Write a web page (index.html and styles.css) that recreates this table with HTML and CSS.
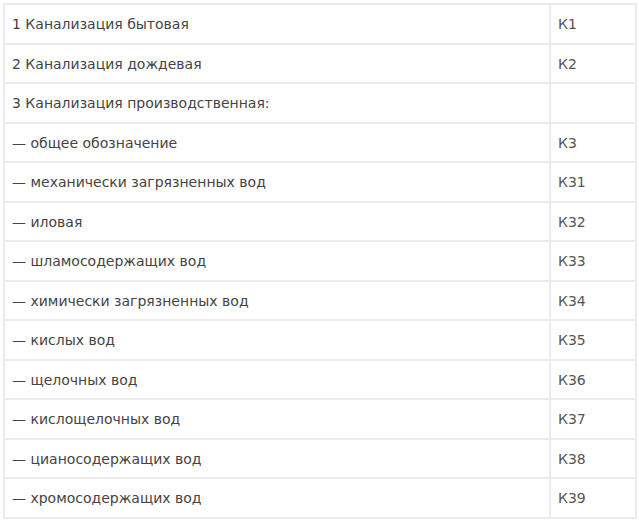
FILE: index.html
```html
<!DOCTYPE html>
<html lang="ru">
<head>
<meta charset="utf-8">
<link rel="stylesheet" href="styles.css">
</head>
<body>
<table class="codes">
<tbody>
<tr><td class="name">1 Канализация бытовая</td><td class="code">К1</td></tr>
<tr><td class="name">2 Канализация дождевая</td><td class="code">К2</td></tr>
<tr><td class="name">3 Канализация производственная:</td><td class="code"></td></tr>
<tr><td class="name">— общее обозначение</td><td class="code">К3</td></tr>
<tr><td class="name">— механически загрязненных вод</td><td class="code">К31</td></tr>
<tr><td class="name">— иловая</td><td class="code">К32</td></tr>
<tr><td class="name">— шламосодержащих вод</td><td class="code">К33</td></tr>
<tr><td class="name">— химически загрязненных вод</td><td class="code">К34</td></tr>
<tr><td class="name">— кислых вод</td><td class="code">К35</td></tr>
<tr><td class="name">— щелочных вод</td><td class="code">К36</td></tr>
<tr><td class="name">— кислощелочных вод</td><td class="code">К37</td></tr>
<tr><td class="name">— цианосодержащих вод</td><td class="code">К38</td></tr>
<tr><td class="name">— хромосодержащих вод</td><td class="code">К39</td></tr>
</tbody>
</table>
</body>
</html>
```

FILE: styles.css
```css
html, body {
  margin: 0;
  padding: 0;
  background: #ffffff;
}
body {
  padding: 3px 2px 0 3px;
  font-family: "DejaVu Sans", "Noto Sans", sans-serif;
  font-size: 14px;
  color: #444444;
}
.codes {
  border-collapse: collapse;
  width: 634px;
}
.codes tr {
  height: 39.5px;
}
.codes td {
  border: 2px solid #ebebeb;
  padding: 1px 7px 0 7px;
  vertical-align: middle;
  font-weight: 400;
}
.codes .name {
  width: 530px;
}
.codes .code {
  color: #555555;
}
```
